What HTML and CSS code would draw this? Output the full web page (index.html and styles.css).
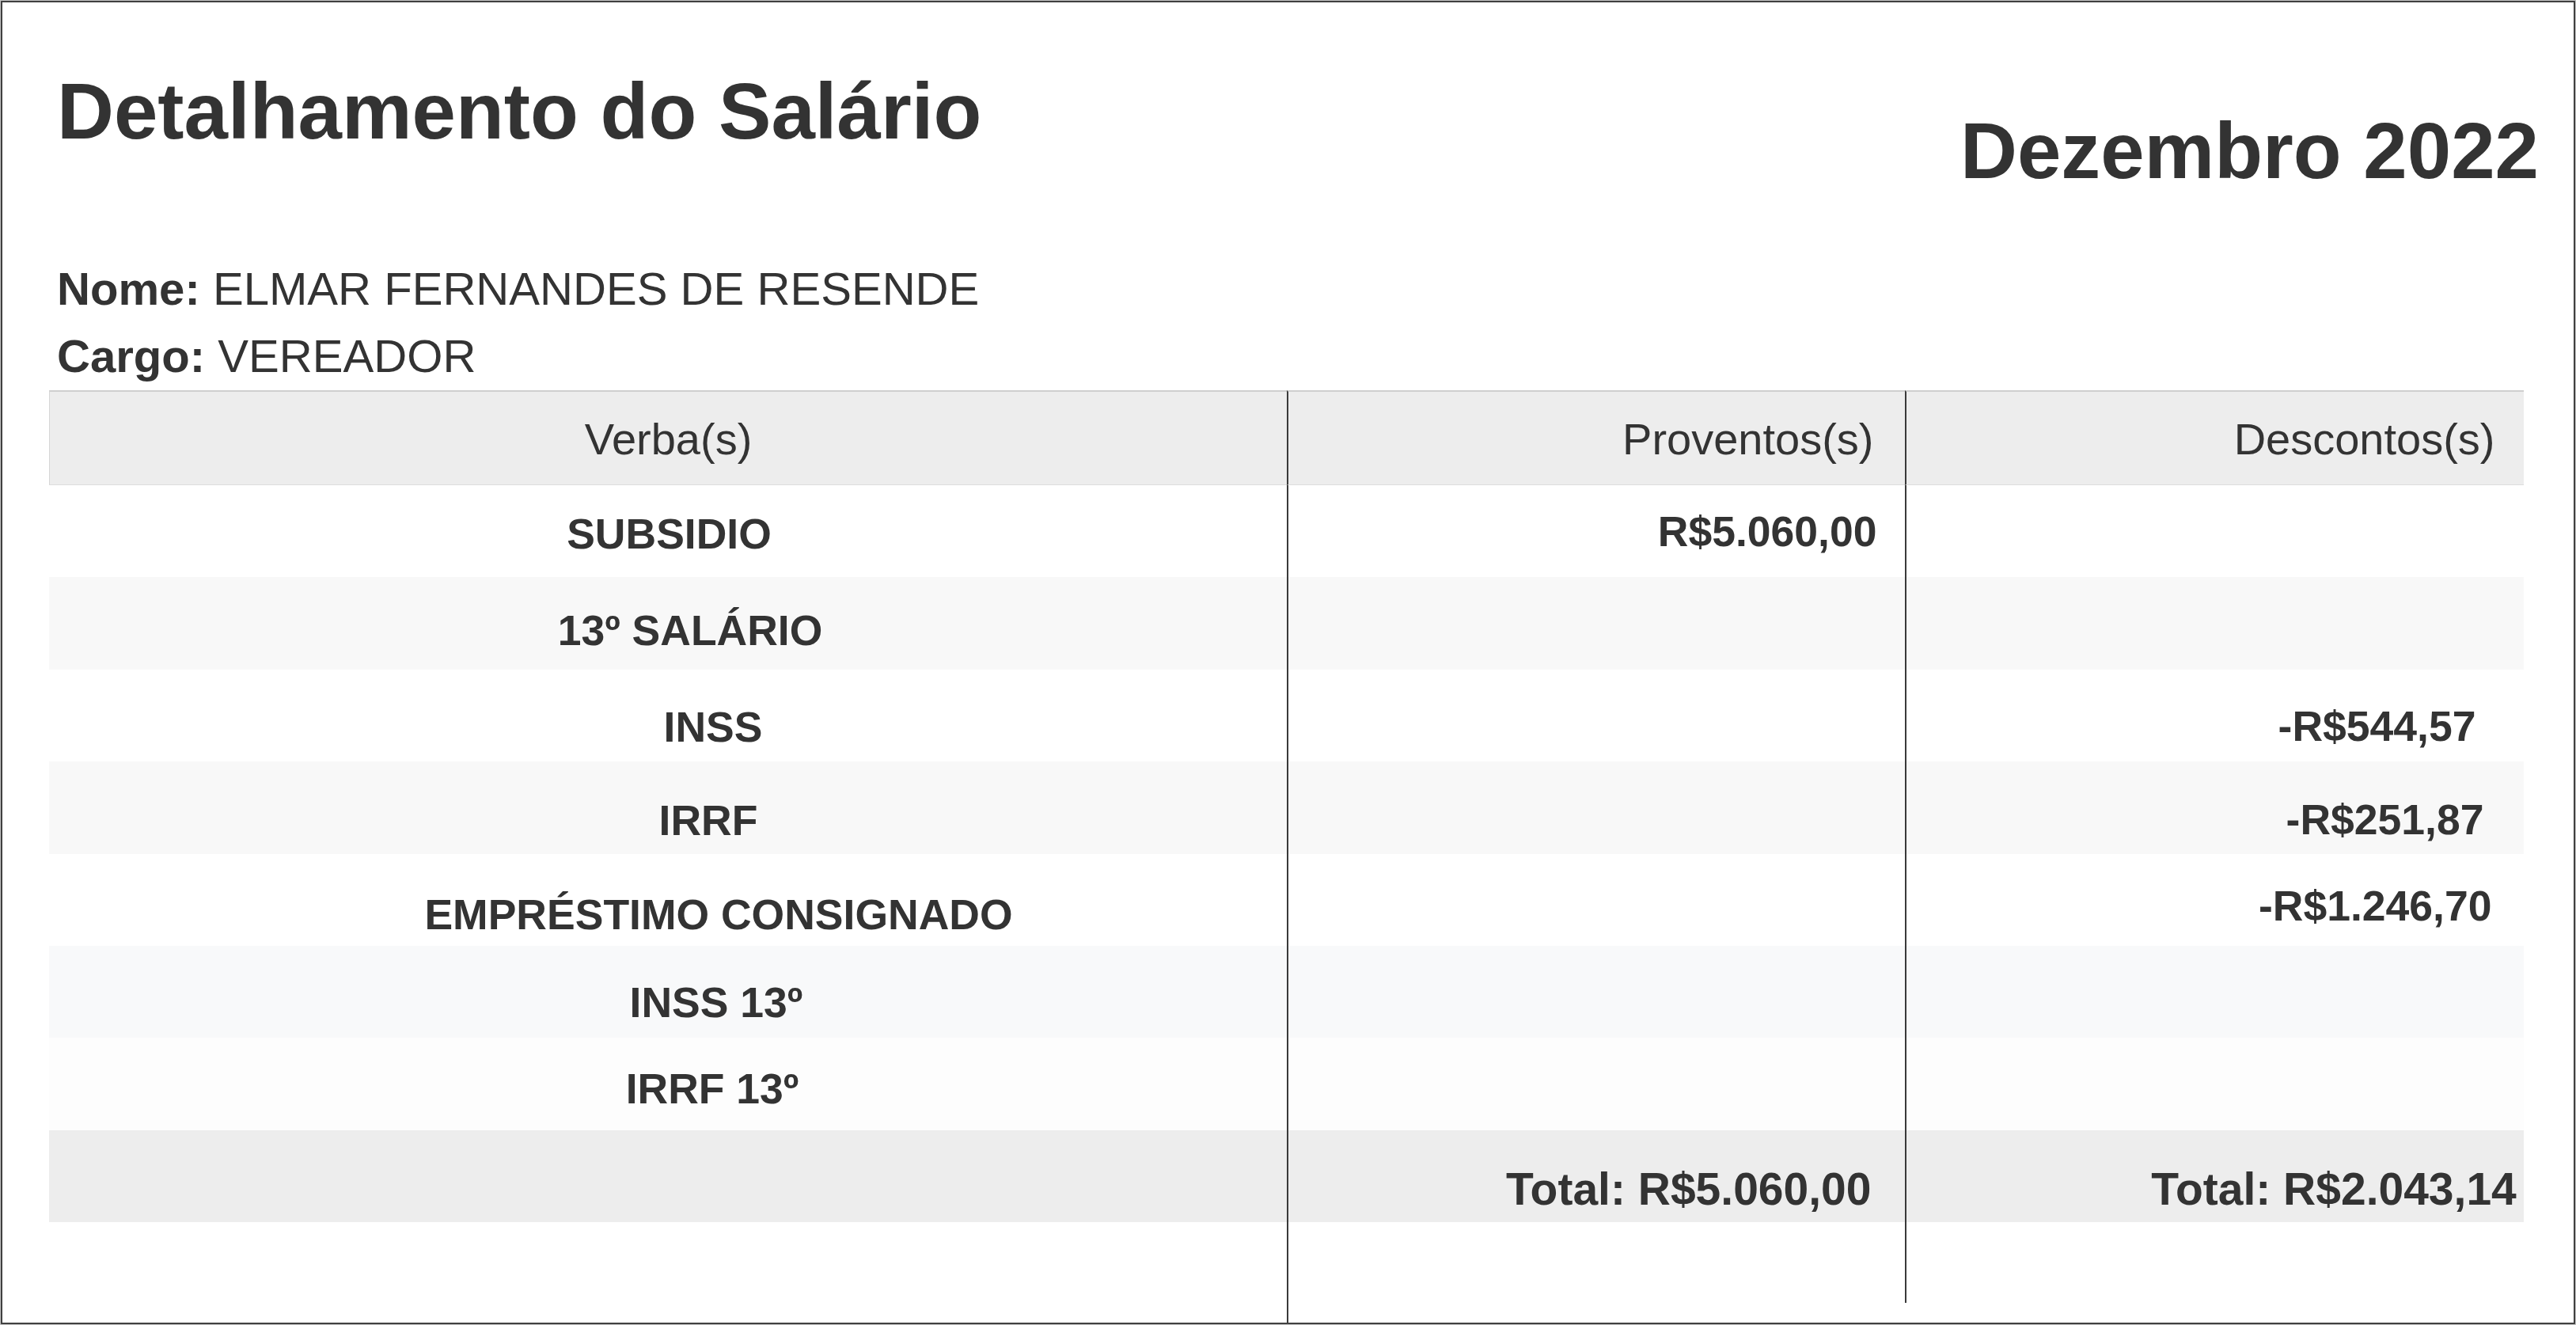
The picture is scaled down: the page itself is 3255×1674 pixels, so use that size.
FILE: index.html
```html
<!DOCTYPE html>
<html lang="pt-BR">
<head>
<meta charset="utf-8">
<title>Detalhamento do Salário</title>
<link rel="stylesheet" href="styles.css">
</head>
<body>
<div class="page">
  <header class="top">
    <h1 class="title">Detalhamento do Salário</h1>
    <h2 class="month">Dezembro 2022</h2>
  </header>
  <div class="info">
    <p><strong>Nome:</strong> ELMAR FERNANDES DE RESENDE</p>
    <p><strong>Cargo:</strong> VEREADOR</p>
  </div>
  <div class="sheet">
    <div class="cell head c1">Verba(s)</div>
    <div class="cell head c2">Proventos(s)</div>
    <div class="cell head c3">Descontos(s)</div>

    <div class="cell r1 c1">SUBSIDIO</div>
    <div class="cell r1 c2">R$5.060,00</div>
    <div class="cell r1 c3"></div>

    <div class="cell r2 c1">13º SALÁRIO</div>
    <div class="cell r2 c2"></div>
    <div class="cell r2 c3"></div>

    <div class="cell r3 c1">INSS</div>
    <div class="cell r3 c2"></div>
    <div class="cell r3 c3">-R$544,57</div>

    <div class="cell r4 c1">IRRF</div>
    <div class="cell r4 c2"></div>
    <div class="cell r4 c3">-R$251,87</div>

    <div class="cell r5 c1">EMPRÉSTIMO CONSIGNADO</div>
    <div class="cell r5 c2"></div>
    <div class="cell r5 c3">-R$1.246,70</div>

    <div class="cell r6 c1">INSS 13º</div>
    <div class="cell r6 c2"></div>
    <div class="cell r6 c3"></div>

    <div class="cell r7 c1">IRRF 13º</div>
    <div class="cell r7 c2"></div>
    <div class="cell r7 c3"></div>

    <div class="cell total c1"></div>
    <div class="cell total c2">Total: R$5.060,00</div>
    <div class="cell total c3">Total: R$2.043,14</div>

    <div class="tail c1"></div>
    <div class="tail c2"></div>
    <div class="tail c3"></div>
  </div>
</div>
</body>
</html>
```

FILE: styles.css
```css
html, body {
  margin: 0;
  padding: 0;
  background: #c4c4c4;
}

body {
  font-family: "Liberation Sans", Arial, Helvetica, sans-serif;
  color: #333;
}

.page {
  box-sizing: border-box;
  width: 3253px;
  height: 1672px;
  margin: 1px;
  border: 2px solid #404040;
  background: #fff;
  overflow: hidden;
}

/* ---------- heading ---------- */
.top {
  display: flex;
  justify-content: space-between;
  align-items: flex-start;
  padding: 80px 44px 0 69px;
}

.title,
.month {
  margin: 0;
  font-size: 99.65px;
  line-height: 115px;
  font-weight: bold;
  color: #333;
  white-space: nowrap;
}

.month {
  margin-top: 49.5px;
}

/* ---------- person info ---------- */
.info {
  margin-top: 74px;
  padding-left: 69px;
}

.info p {
  margin: 0;
  font-size: 58.1px;
  line-height: 85px;
  white-space: nowrap;
}

/* ---------- sheet ---------- */
.sheet {
  display: grid;
  grid-template-columns: 1564px 781px 782px;
  width: 3127px;
  margin: 1.5px 0 0 59px;
}

.cell {
  box-sizing: border-box;
  height: 116.4px;
  font-size: 53.5px;
  line-height: 62px;
  font-weight: bold;
  white-space: nowrap;
  color: #333;
}

.c1 {
  text-align: center;
}

.c2,
.c3 {
  text-align: right;
  border-left: 2px solid #3a3a3a;
}

.c2 {
  padding-right: 35.6px;
}

.c3 {
  padding-right: 40px;
}

/* header */
.head {
  height: 120px;
  background: #ededed;
  border-top: 2px solid #cfcfcf;
  border-bottom: 1px solid #dcdcdc;
  font-size: 56px;
  line-height: 64px;
  font-weight: normal;
  padding-top: 27.8px;
}

.head.c1 {
  border-left: 1px solid #d6d6d6;
}

.head.c2 {
  padding-right: 39.5px;
}

.head.c3 {
  padding-right: 36.5px;
}

/* row backgrounds */
.r1, .r3, .r5 { background: #fff; }
.r2, .r4 { background: #f8f8f8; }
.r6 { background: #f8f9fa; }
.r7 { background: #fdfdfd; }
.total { background: #ededed; }

/* per-row text placement */
.r1.c1 { padding-top: 31.3px; padding-left: 3px; }
.r1.c2 { padding-top: 28.3px; }

.r2.c1 { padding-top: 36.9px; padding-left: 56px; }

.r3.c1 { padding-top: 42.1px; padding-left: 114px; }
.r3.c3 { padding-top: 41.3px; padding-right: 60.6px; }

.r4.c1 { padding-top: 44.1px; padding-left: 102px; }
.r4.c3 { padding-top: 43.1px; padding-right: 50.6px; }

.r5.c1 { padding-top: 46.7px; padding-left: 128px; }
.r5.c3 { padding-top: 35.7px; padding-right: 40.6px; }

.r6.c1 { padding-top: 41.3px; padding-left: 122px; }

.r7.c1 { padding-top: 33.9px; padding-left: 112px; }

.total {
  font-size: 57px;
  line-height: 65px;
  padding-top: 42.4px;
}

.total.c2 { padding-right: 42.5px; }
.total.c3 { padding-right: 9.2px; }

/* column rules running below the sheet */
.tail {
  align-self: start;
}

.tail.c2 {
  height: 127px;
}

.tail.c3 {
  height: 102px;
}
```
